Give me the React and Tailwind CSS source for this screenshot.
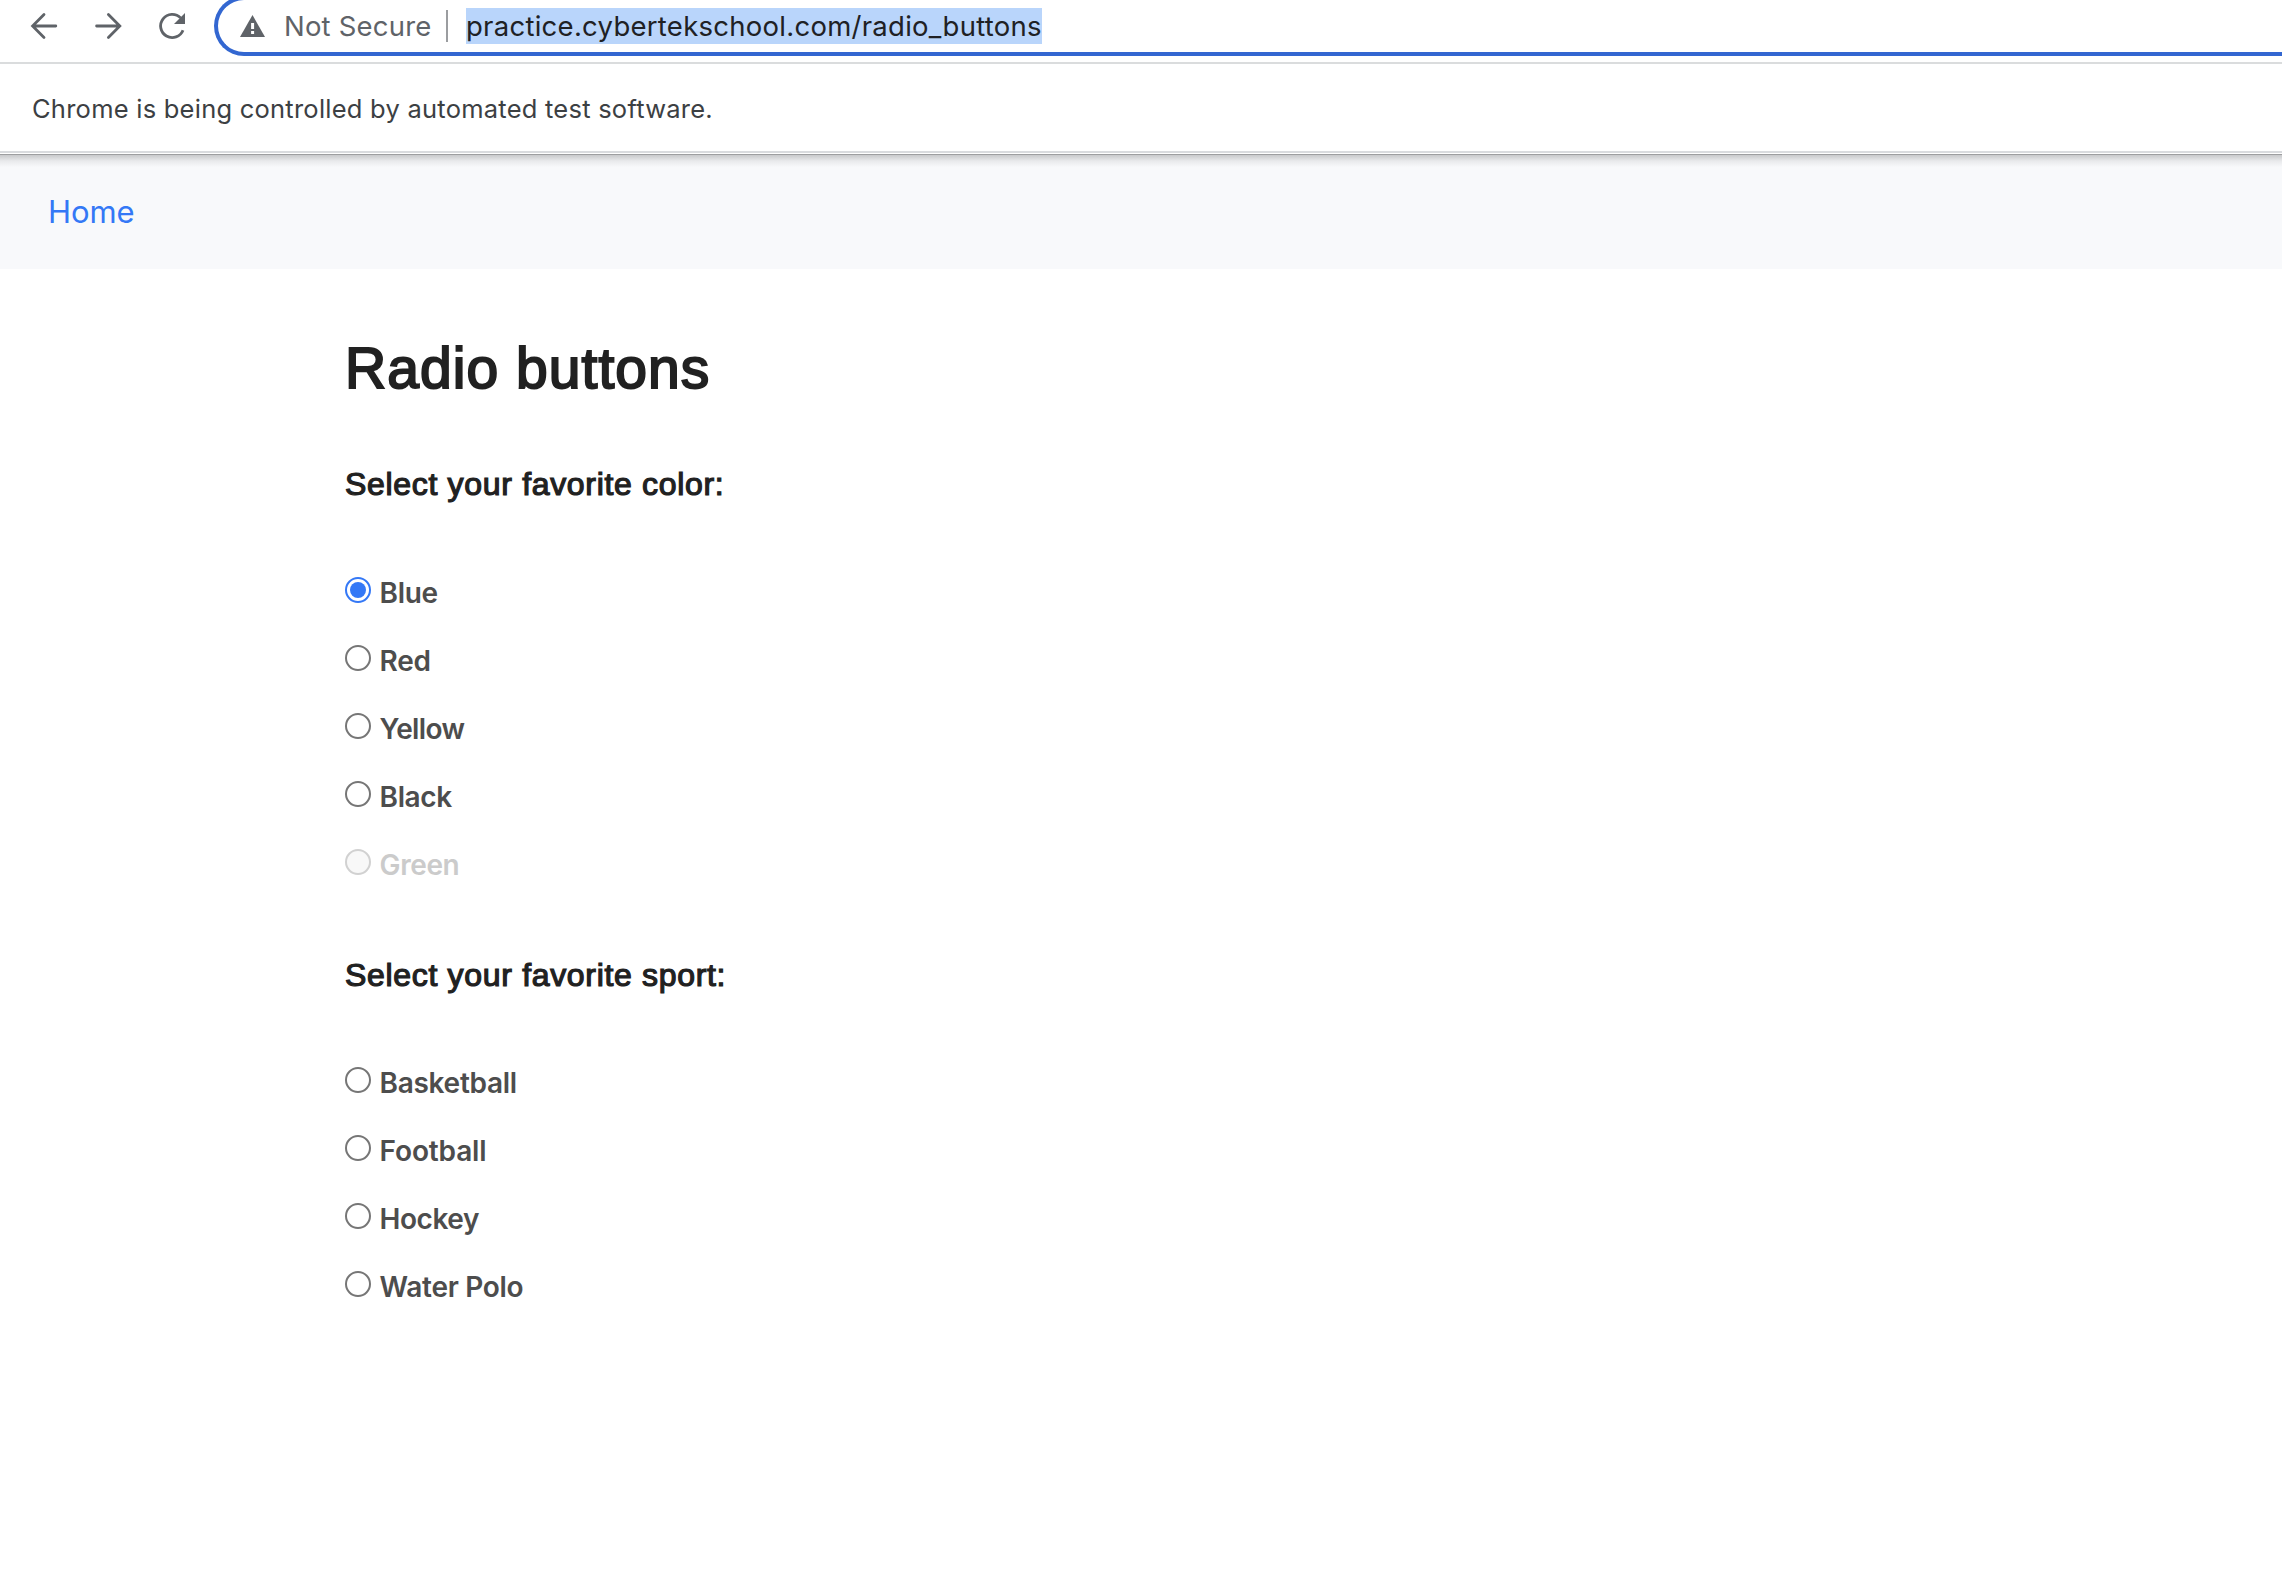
const sans = "font-['Inter','Liberation_Sans',sans-serif]";

const colors = [
  { label: 'Blue', track: 'tracking-[-0.35px]', checked: true },
  { label: 'Red', track: 'tracking-[-0.3px]' },
  { label: 'Yellow', track: 'tracking-[-0.65px]' },
  { label: 'Black', track: 'tracking-[-0.4px]' },
  { label: 'Green', track: 'tracking-[-0.4px]', disabled: true },
];

const sports = [
  { label: 'Basketball', track: 'tracking-[-0.3px]' },
  { label: 'Football', track: 'tracking-[-0.15px]' },
  { label: 'Hockey', track: 'tracking-[-0.45px]' },
  { label: 'Water Polo', track: 'tracking-[-0.3px]' },
];

function Radio({ checked, disabled }) {
  let ring = 'border-[#767676] bg-white';
  if (checked) ring = 'border-[#3478f6] bg-white';
  if (disabled) ring = 'border-[#d1d1d1] bg-[#f8f8f8]';
  return (
    <span className={`mb-1.5 flex size-[26px] items-center justify-center rounded-full border-2 ${ring}`}>
      {checked && <span className="size-4 rounded-full bg-[#3478f6]" />}
    </span>
  );
}

function RadioList({ items }) {
  return (
    <ul>
      {items.map((o) => (
        <li
          key={o.label}
          className={`flex h-[68px] items-center text-[28px] leading-none font-semibold ${
            o.disabled ? 'text-[#cbcbcb]' : 'text-[#4d4d4d]'
          }`}
        >
          <Radio checked={o.checked} disabled={o.disabled} />
          <span className={`ml-[8.6px] whitespace-nowrap ${o.track}`}>{o.label}</span>
        </li>
      ))}
    </ul>
  );
}

function Toolbar() {
  return (
    <div className="flex h-16 overflow-hidden border-b-2 border-[#dadcdd] bg-white">
      <div className="flex pt-[11px] pl-[29px] text-[#5f6368]">
        <svg className="size-[30px]" viewBox="0 0 30 30" fill="none" stroke="currentColor" strokeWidth="2.8" strokeLinecap="round" strokeLinejoin="miter">
          <path d="M26.8 15H4M15 3.6 3.6 15 15 26.4" />
        </svg>
        <svg className="ml-[34px] size-[30px]" viewBox="0 0 30 30" fill="none" stroke="currentColor" strokeWidth="2.8" strokeLinecap="round" strokeLinejoin="miter">
          <path d="M3.6 15H26M15.4 3.6 26.8 15 15.4 26.4" />
        </svg>
        <svg className="ml-[34px] size-[30px]" viewBox="0 0 30 30" fill="none">
          <path d="M23.6 6.9A11.6 11.6 0 1 0 26 19.2" stroke="currentColor" strokeWidth="2.8" />
          <path d="M28 2v11H17z" fill="currentColor" />
        </svg>
      </div>
      <div className="-mt-1 ml-[27px] flex h-[60px] flex-1 items-center rounded-l-full border-4 border-r-0 border-[#3367d1] pl-[22px]">
        <svg className="h-[22px] w-[25px]" viewBox="0 0 25 22">
          <path d="M12.5 0 25 22H0z" fill="#5f6368" />
          <path d="M11.1 8h3v6h-3zM11.1 16h3v3h-3z" fill="#fff" />
        </svg>
        <span className="ml-[19px] w-[162px] text-[27.5px] leading-9 tracking-[0.2px] whitespace-nowrap text-[#5f6368]">Not Secure</span>
        <span className="h-8 w-0.5 bg-[#9b9da0]" />
        <span className="ml-[18px] bg-[#b9d5fb] text-[27.5px] leading-9 tracking-[0.27px] whitespace-nowrap text-[#202124]">
          practice.cybertekschool.com/radio_buttons
        </span>
      </div>
    </div>
  );
}

export default function App() {
  return (
    <div className={`h-[1578px] w-full overflow-hidden bg-white ${sans}`}>
      <Toolbar />
      <div className="flex h-[89px] items-center border-b-2 border-[#d9dbde] bg-white pt-[3px] pl-8 text-[25.5px] leading-none tracking-[0.24px] whitespace-nowrap text-[#3c4043]">
        <span>Chrome is being controlled by automated test software.</span>
      </div>
      <div className="h-px bg-white" />
      <nav className="h-[115px] bg-[#f8f9fb]">
        <div className="h-px bg-[#9d9ea0]" />
        <div className="h-3 bg-linear-to-b from-[#c8c9cb] via-[#e9eaec] to-[#f8f9fb]" />
        <div className="flex h-[89px] items-center pl-12 text-[31px] leading-none text-[#3478f6]">
          <a className="tracking-[-0.1px]">Home</a>
        </div>
      </nav>
      <main className="pt-[68px] pl-[345px]">
        <h1 className="h-[63px] font-['Liberation_Sans'] text-[57px] leading-[63px] tracking-[1.05px] whitespace-nowrap text-[#212121] [-webkit-text-stroke:2px_#212121]">
          Radio buttons
        </h1>
        <h2 className="mt-[60px] h-12 font-['Liberation_Sans'] text-[32px] leading-12 tracking-[0.68px] whitespace-nowrap text-[#212121] [-webkit-text-stroke:1.2px_#212121]">
          Select your favorite color:
        </h2>
        <div className="pt-[51px]">
          <RadioList items={colors} />
        </div>
        <h2 className="mt-[52px] h-12 font-['Liberation_Sans'] text-[32px] leading-12 tracking-[0.68px] whitespace-nowrap text-[#212121] [-webkit-text-stroke:1.2px_#212121]">
          Select your favorite sport:
        </h2>
        <div className="pt-[50px]">
          <RadioList items={sports} />
        </div>
      </main>
    </div>
  );
}
